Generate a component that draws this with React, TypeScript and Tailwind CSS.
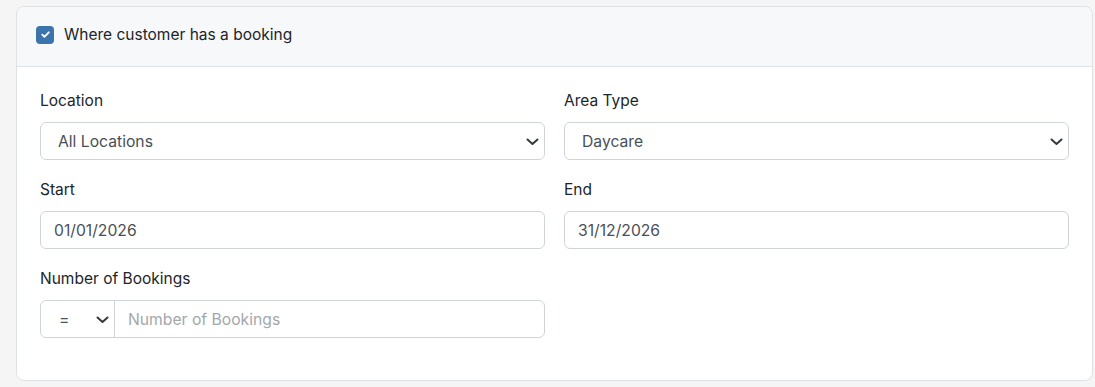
import React from "react";

const Chevron = () => (
  <svg width="13" height="13" viewBox="0 0 13 13" fill="none" className="shrink-0">
    <path d="M1.5 4.5l5 4.5 5-4.5" stroke="#343a40" strokeWidth="2" strokeLinecap="round" strokeLinejoin="round" />
  </svg>
);

const SelectBox = ({ value }: { value: string }) => (
  <div className="flex h-[38px] items-center justify-between rounded-[6px] border border-[#ced4da] bg-white pl-[17px] pr-[5px] text-[15.7px] text-[#495057]">
    <span className="pt-[2px]">{value}</span>
    <Chevron />
  </div>
);

const InputBox = ({ value }: { value: string }) => (
  <div className="flex h-[38px] items-center rounded-[6px] border border-[#ced4da] bg-white px-[13px] pt-[2px] text-[15.7px] text-[#495057]">
    {value}
  </div>
);

const Label = ({ children }: { children: React.ReactNode }) => (
  <div className="mb-[11px] text-[15.5px] leading-[20px] text-[#212529]">{children}</div>
);

export default function App() {
  return (
    <div className="min-h-[387px] w-[1095px] bg-[#f5f5f5] pl-[16px] pr-[2px] pt-[6px]" style={{ fontFamily: "Inter, 'Noto Sans', sans-serif" }}>
      <div className="h-[375px] overflow-hidden rounded-[8px] border border-[#dee2e6] bg-white">
        <div className="flex h-[60px] items-center gap-[10px] border-b border-[#dee2e6] bg-[#f7f8fa] pb-[4px] pl-[19px]">
          <div className="flex h-[18px] w-[18px] items-center justify-center rounded-[4px] bg-[#3b74aa]">
            <svg width="11" height="11" viewBox="0 0 12 12" fill="none">
              <path d="M2.5 6.2l2.3 2.3L9.6 3.6" stroke="white" strokeWidth="2" strokeLinecap="round" strokeLinejoin="round" />
            </svg>
          </div>
          <span className="text-[15.5px] text-[#212529]">Where customer has a booking</span>
        </div>
        <div className="px-[23px] pt-[24px]">
          <div className="grid grid-cols-2 gap-x-[19px] gap-y-[20px]">
            <div>
              <Label>Location</Label>
              <SelectBox value="All Locations" />
            </div>
            <div>
              <Label>Area Type</Label>
              <SelectBox value="Daycare" />
            </div>
            <div>
              <Label>Start</Label>
              <InputBox value="01/01/2026" />
            </div>
            <div>
              <Label>End</Label>
              <InputBox value="31/12/2026" />
            </div>
            <div>
              <Label>Number of Bookings</Label>
              <div className="mt-[1px] flex h-[38px] overflow-hidden rounded-[6px] border border-[#ced4da] bg-white text-[15.7px]">
                <div className="flex w-[74px] items-center justify-between border-r border-[#ced4da] pl-[18px] pr-[5px] text-[#495057]">
                  <span className="pt-[2px]">=</span>
                  <Chevron />
                </div>
                <div className="flex items-center pl-[13px] pt-[2px] text-[#a3a7ab]">Number of Bookings</div>
              </div>
            </div>
          </div>
        </div>
      </div>
    </div>
  );
}
